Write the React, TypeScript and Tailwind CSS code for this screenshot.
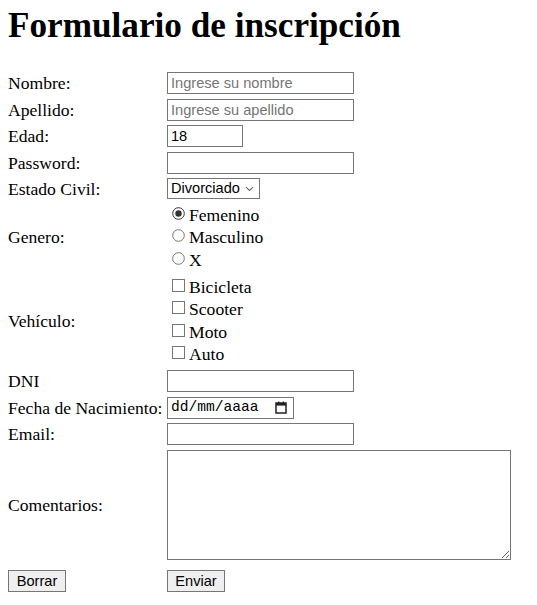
import React from 'react';

const inputCls =
    "h-[22px] border border-[#767676] bg-white px-[3px] font-['Liberation_Sans',Arial,sans-serif] text-[14.6px] text-black placeholder:text-[#757575] outline-none";

const btnCls =
    "h-[22px] w-[58px] border border-[#767676] bg-[#efefef] font-['Liberation_Sans',Arial,sans-serif] text-[14.6px] leading-[20px] text-black";

function Row({ label, children }: { label: string; children: React.ReactNode }) {
    return (
        <>
            <div className="leading-[20px]">{label}</div>
            <div className="flex items-center">{children}</div>
        </>
    );
}

function Radio({ label, checked }: { label: string; checked?: boolean }) {
    return (
        <label className="flex h-[22.5px] items-center">
            <span className="ml-[5px] mr-[4px] mb-[3px] flex">
                <svg width="13" height="13" viewBox="0 0 13 13">
                    <circle cx="6.5" cy="6.5" r="5.8" fill="white" stroke={checked ? '#333' : '#767676'} strokeWidth="1" />
                    {checked && <circle cx="6.5" cy="6.5" r="3.2" fill="#333" />}
                </svg>
            </span>
            <span>{label}</span>
        </label>
    );
}

function Check({ label }: { label: string }) {
    return (
        <label className="flex h-[22.5px] items-center">
            <span className="ml-[5px] mr-[4px] mb-[3px] h-[13px] w-[13px] border border-[#767676] bg-white" />
            <span>{label}</span>
        </label>
    );
}

export default function App() {
    return (
        <div className="min-h-screen bg-white p-2 font-['Liberation_Serif','Times_New_Roman',serif] text-[17.6px] text-black">
            <h1 className="mb-[28px] text-[35.2px] font-bold leading-[36px]">Formulario de inscripción</h1>

            <form className="grid grid-cols-[159px_1fr] items-center gap-y-[4.5px]">
                <Row label="Nombre:">
                    <input className={`${inputCls} w-[187px]`} placeholder="Ingrese su nombre" />
                </Row>
                <Row label="Apellido:">
                    <input className={`${inputCls} w-[187px]`} placeholder="Ingrese su apellido" />
                </Row>
                <Row label="Edad:">
                    <input className={`${inputCls} w-[76px]`} defaultValue="18" />
                </Row>
                <Row label="Password:">
                    <input type="password" className={`${inputCls} w-[187px]`} />
                </Row>
                <Row label="Estado Civil:">
                    <div className="relative flex">
                        <select
                            defaultValue="Divorciado"
                            className="h-[21px] w-[93px] appearance-none border border-[#767676] bg-white pl-[3px] font-['Liberation_Sans',Arial,sans-serif] text-[14.6px] leading-[19px] text-black outline-none"
                        >
                            <option>Soltero</option>
                            <option>Casado</option>
                            <option>Divorciado</option>
                            <option>Viudo</option>
                        </select>
                        <svg className="pointer-events-none absolute right-[6px] top-[8px]" width="9" height="6" viewBox="0 0 9 6">
                            <path d="M1 1.2 L4.5 4.5 L8 1.2" fill="none" stroke="#6a6a6a" strokeWidth="1.1" />
                        </svg>
                    </div>
                </Row>
                <Row label="Genero:">
                    <div className="flex flex-col">
                        <Radio label="Femenino" checked />
                        <Radio label="Masculino" />
                        <Radio label="X" />
                    </div>
                </Row>
                <Row label="Vehículo:">
                    <div className="flex flex-col">
                        <Check label="Bicicleta" />
                        <Check label="Scooter" />
                        <Check label="Moto" />
                        <Check label="Auto" />
                    </div>
                </Row>
                <Row label="DNI">
                    <input className={`${inputCls} w-[187px]`} />
                </Row>
                <Row label="Fecha de Nacimiento:">
                    <div className="flex h-[22px] w-[127px] items-center border border-[#767676] bg-white pl-[3px] pr-[6px]">
                        <span className="font-['Liberation_Mono','Courier_New',monospace] text-[14.6px] text-black">
                            dd/mm/aaaa
                        </span>
                        <svg className="ml-auto" width="12" height="13" viewBox="0 0 12 13">
                            <rect x="1" y="2" width="10" height="10" fill="none" stroke="#222" strokeWidth="1.5" />
                            <rect x="1" y="2" width="10" height="2.6" fill="#222" />
                            <rect x="3" y="0.5" width="1.3" height="2" fill="#222" />
                            <rect x="7.7" y="0.5" width="1.3" height="2" fill="#222" />
                        </svg>
                    </div>
                </Row>
                <Row label="Email:">
                    <input type="email" className={`${inputCls} w-[187px]`} />
                </Row>
                <Row label="Comentarios:">
                    <textarea className="h-[110px] w-[344px] resize border border-[#767676] bg-white p-[2px] font-['Liberation_Mono',monospace] text-[14.6px] outline-none" />
                </Row>
                <div className="mt-[6px] flex">
                    <button type="reset" className={btnCls}>
                        Borrar
                    </button>
                </div>
                <div className="mt-[6px] flex">
                    <button type="submit" className={btnCls}>
                        Enviar
                    </button>
                </div>
            </form>
        </div>
    );
}
